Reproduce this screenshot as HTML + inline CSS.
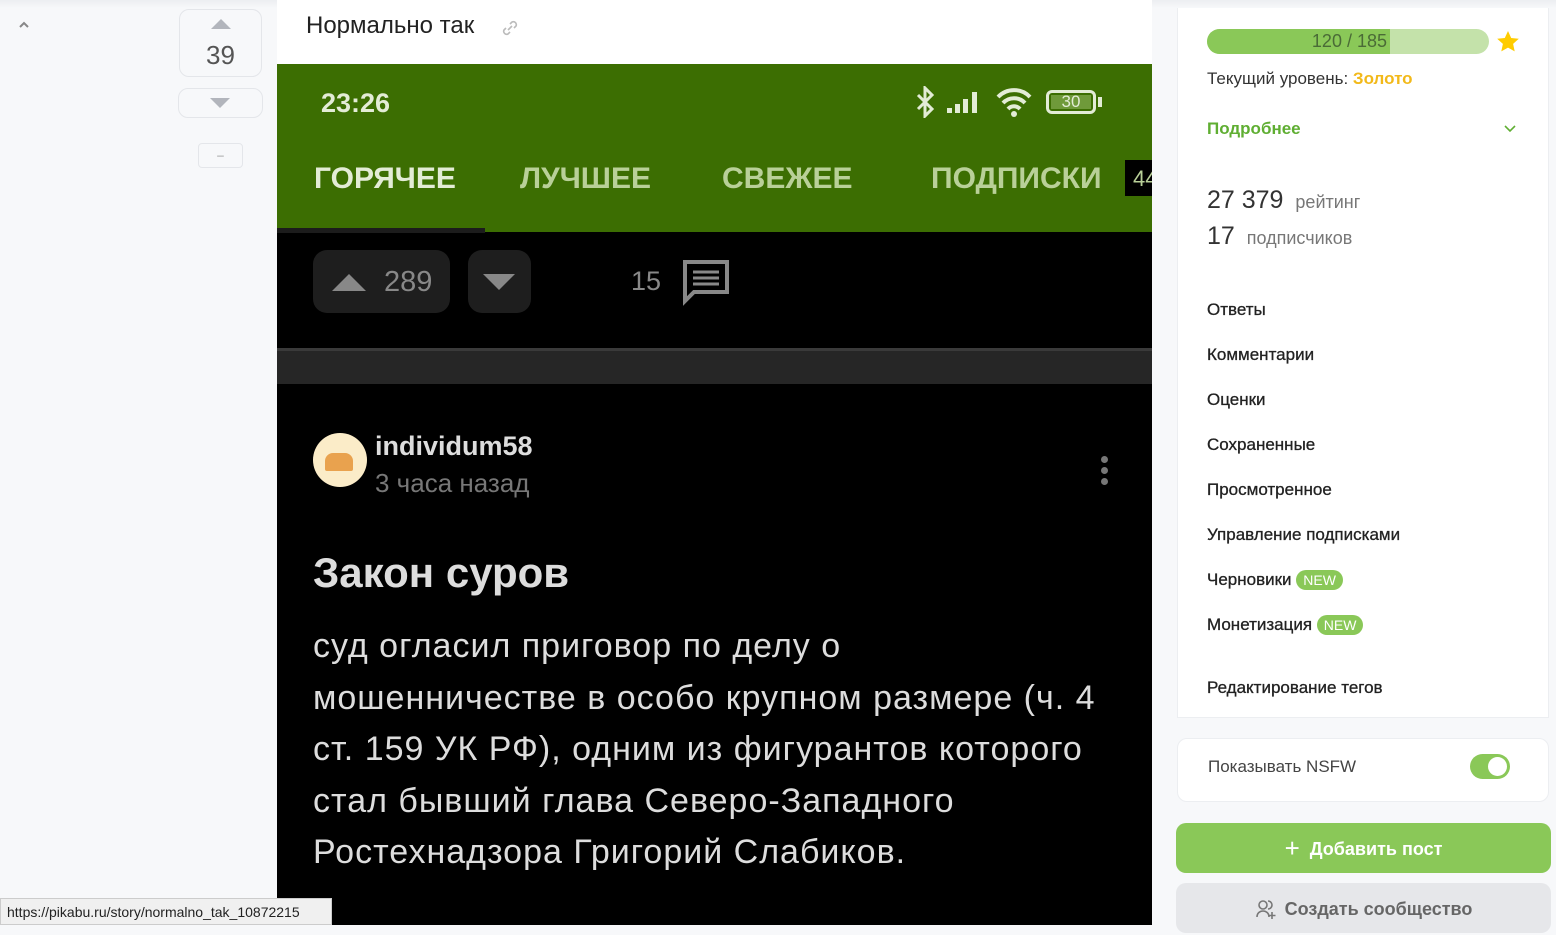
<!DOCTYPE html><html><head><meta charset="utf-8"><style>
*{margin:0;padding:0;box-sizing:border-box}
body{width:1556px;height:925px;overflow:hidden;background:#f7f8fa;font-family:"Liberation Sans",sans-serif;position:relative;color:#222}
.a{position:absolute}
.img{left:277px;top:64px;width:875px;height:861px;background:#000;overflow:hidden}
.gt{color:#e3ecd6;font-weight:bold;font-size:30px;top:97px}
.menu{font-size:17px;color:#222;left:1207px;-webkit-text-stroke:0.3px #222}
</style></head><body>
<div class="a" style="left:0;top:0;width:1556px;height:8px;background:linear-gradient(#eceef1,#f7f8fa)"></div>
<svg class="a" style="left:18px;top:20px" width="12" height="10"><path d="M2 7l4-4 4 4" stroke="#888" stroke-width="2" fill="none"/></svg>
<div class="a" style="left:179px;top:9px;width:83px;height:68px;border:1px solid #e4e6ea;border-radius:10px;background:#f7f8fa"></div>
<div class="a" style="left:211px;top:19px;width:0;height:0;border-left:10px solid transparent;border-right:10px solid transparent;border-bottom:10px solid #b2b5bc"></div>
<div class="a" style="left:179px;top:40px;width:83px;text-align:center;font-size:26px;color:#555">39</div>
<div class="a" style="left:178px;top:88px;width:85px;height:30px;border:1px solid #e4e6ea;border-radius:10px"></div>
<div class="a" style="left:210px;top:98px;width:0;height:0;border-left:10px solid transparent;border-right:10px solid transparent;border-top:10px solid #b2b5bc"></div>
<div class="a" style="left:198px;top:143px;width:45px;height:25px;border:1px solid #e4e6ea;border-radius:4px;text-align:center;color:#999;font-size:12px;line-height:22px">–</div>
<div class="a" style="left:277px;top:0;width:875px;height:64px;background:#fff"></div>
<div class="a" style="left:306px;top:12px;font-size:24px;color:#222">Нормально так</div>
<svg class="a" style="left:500px;top:18px" width="20" height="20"><path d="M8 12l4-4M6 10l-2 2a3 3 0 0 0 4 4l2-2M14 10l2-2a3 3 0 0 0-4-4l-2 2" stroke="#bbb" stroke-width="1.6" fill="none"/></svg>
<div class="a img">
 <div class="a" style="left:0;top:0;width:875px;height:168px;background:#3c6e02"></div>
 <div class="a" style="left:44px;top:24px;color:#e3ecd6;font-size:27px;font-weight:bold">23:26</div>
 <svg class="a" style="left:638px;top:22px" width="20" height="32"><path d="M3 9l14 14-7 7V2l7 7L3 23" stroke="#e3ecd6" stroke-width="3" fill="none"/></svg>
 <div class="a" style="left:670px;top:26px;width:40px;height:24px">
  <div class="a" style="left:0;top:18px;width:5px;height:5px;background:#e3ecd6"></div><div class="a" style="left:8px;top:14px;width:5px;height:9px;background:#e3ecd6"></div><div class="a" style="left:16px;top:9px;width:5px;height:14px;background:#e3ecd6"></div><div class="a" style="left:25px;top:2px;width:5px;height:21px;background:#e3ecd6"></div></div>
 <svg class="a" style="left:718px;top:22px" width="40" height="32"><path d="M3 11a22 22 0 0 1 32 0M8 17a15 15 0 0 1 22 0M13 23a8 8 0 0 1 12 0" stroke="#e3ecd6" stroke-width="4" fill="none"/><circle cx="19" cy="28" r="3" fill="#e3ecd6"/></svg>
 <div class="a" style="left:769px;top:26px;width:50px;height:24px;border:3px solid #e3ecd6;border-radius:6px;background:#3c6e02"><div class="a" style="left:2px;top:2px;width:40px;height:14px;background:#6f9a3a"></div><div class="a" style="left:0;top:-1px;width:44px;text-align:center;color:#e3ecd6;font-size:17px">30</div></div>
 <div class="a" style="left:821px;top:33px;width:4px;height:10px;background:#e3ecd6"></div>
 <div class="a gt" style="left:37px;top:98px">ГОРЯЧЕЕ</div>
 <div class="a gt" style="left:243px;top:98px;color:#b9d098">ЛУЧШЕЕ</div>
 <div class="a gt" style="left:445px;top:98px;color:#b9d098">СВЕЖЕЕ</div>
 <div class="a gt" style="left:654px;top:98px;color:#b9d098">ПОДПИСКИ</div>
 <div class="a" style="left:848px;top:96px;width:40px;height:36px;background:#000;color:#b9d098;font-size:22px;padding:6px 8px">44</div>
 <div class="a" style="left:0;top:164px;width:208px;height:5px;background:#1c1c1c"></div>
 <div class="a" style="left:36px;top:186px;width:137px;height:63px;background:#1e1e1e;border-radius:14px"></div>
 <div class="a" style="left:55px;top:210px;width:0;height:0;border-left:17px solid transparent;border-right:17px solid transparent;border-bottom:17px solid #888"></div>
 <div class="a" style="left:107px;top:202px;color:#888;font-size:29px">289</div>
 <div class="a" style="left:191px;top:186px;width:63px;height:63px;background:#1e1e1e;border-radius:14px"></div>
 <div class="a" style="left:206px;top:210px;width:0;height:0;border-left:16px solid transparent;border-right:16px solid transparent;border-top:16px solid #888"></div>
 <div class="a" style="left:354px;top:202px;color:#888;font-size:27px">15</div>
 <svg class="a" style="left:405px;top:195px" width="48" height="48"><path d="M3 3h42v30H12l-9 9z" stroke="#888" stroke-width="4" fill="none"/><path d="M11 13h26M11 19h26M11 25h26" stroke="#888" stroke-width="3"/></svg>
 <div class="a" style="left:0;top:284px;width:875px;height:36px;background:#262626;border-top:3px solid #3a3a3a"></div>
 <div class="a" style="left:36px;top:369px;width:54px;height:54px;border-radius:50%;background:#fbecc8"><div class="a" style="left:12px;top:20px;width:28px;height:18px;background:#e9a24e;border-radius:8px 8px 2px 2px"></div></div>
 <div class="a" style="left:98px;top:367px;color:#ddd;font-size:27px;font-weight:bold">individum58</div>
 <div class="a" style="left:98px;top:404px;color:#777;font-size:26px">3 часа назад</div>
 <div class="a" style="left:824px;top:392px;width:7px;height:7px;border-radius:50%;background:#777;box-shadow:0 11px #777,0 22px #777"></div>
 <div class="a" style="left:36px;top:485px;color:#ddd;font-size:42px;font-weight:bold">Закон суров</div>
 <div class="a" style="left:36px;top:557px;color:#ddd;font-size:34px;letter-spacing:1px;line-height:51.5px;white-space:nowrap">суд огласил приговор по делу о<br>мошенничестве в особо крупном размере (ч. 4<br>ст. 159 УК РФ), одним из фигурантов которого<br>стал бывший глава Северо-Западного<br>Ростехнадзора Григорий Слабиков.</div>
</div>
<div class="a" style="left:0;top:898px;width:332px;height:27px;background:#f0f0f0;border:1px solid #ccc;font-size:14px;color:#222;padding:5px 6px">https://pikabu.ru/story/normalno_tak_10872215</div>
<div class="a" style="left:1177px;top:8px;width:372px;height:710px;background:#fff;border:1px solid #eceef1;border-top:none"></div>
<div class="a" style="left:1207px;top:29px;width:282px;height:25px;border-radius:13px;background:#c4e2aa;overflow:hidden"><div style="width:183px;height:25px;background:#8ac858"></div></div>
<div class="a" style="left:1207px;top:31px;width:180px;text-align:right;font-size:18px;color:#4a6b36">120 / 185</div>
<svg class="a" style="left:1496px;top:30px" width="24" height="23"><path d="M12 1l3.2 7 7.6.8-5.7 5.1 1.6 7.5L12 17.6l-6.7 3.8 1.6-7.5L1.2 8.8l7.6-.8z" fill="#ffcc00"/></svg>
<div class="a" style="left:1207px;top:69px;font-size:17px;color:#333">Текущий уровень: <b style="color:#f2b91a">Золото</b></div>
<div class="a" style="left:1207px;top:119px;font-size:17px;color:#5fae32;font-weight:bold">Подробнее</div>
<svg class="a" style="left:1503px;top:124px" width="14" height="10"><path d="M2 2l5 5 5-5" stroke="#5fae32" stroke-width="1.6" fill="none"/></svg>
<div class="a" style="left:1207px;top:186px;font-size:25px;color:#333">27 379 <span style="font-size:18px;color:#777">&nbsp;рейтинг</span></div>
<div class="a" style="left:1207px;top:222px;font-size:25px;color:#333">17 <span style="font-size:18px;color:#777">&nbsp;подписчиков</span></div>
<div class="a menu" style="top:300px">Ответы</div>
<div class="a menu" style="top:345px">Комментарии</div>
<div class="a menu" style="top:390px">Оценки</div>
<div class="a menu" style="top:435px">Сохраненные</div>
<div class="a menu" style="top:480px">Просмотренное</div>
<div class="a menu" style="top:525px">Управление подписками</div>
<div class="a menu" style="top:570px">Черновики <span style="background:#8ac858;color:#fff;font-size:14px;border-radius:10px;padding:2px 7px;-webkit-text-stroke:0">NEW</span></div>
<div class="a menu" style="top:615px">Монетизация <span style="background:#8ac858;color:#fff;font-size:14px;border-radius:10px;padding:2px 7px;-webkit-text-stroke:0">NEW</span></div>
<div class="a menu" style="top:678px">Редактирование тегов</div>
<div class="a" style="left:1177px;top:738px;width:372px;height:64px;background:#fff;border:1px solid #eceef1;border-radius:10px"></div>
<div class="a" style="left:1208px;top:757px;font-size:17px;color:#444">Показывать NSFW</div>
<div class="a" style="left:1470px;top:754px;width:40px;height:25px;border-radius:13px;background:#8ac858"><div class="a" style="left:18px;top:3px;width:19px;height:19px;border-radius:50%;background:#fff"></div></div>
<div class="a" style="left:1176px;top:823px;width:375px;height:50px;border-radius:10px;background:#8ac858;color:#fff;font-size:18px;font-weight:bold;text-align:center;line-height:50px"><span style="font-size:26px;font-weight:normal;vertical-align:-2px">+</span>&nbsp; Добавить пост</div>
<div class="a" style="left:1176px;top:883px;width:375px;height:50px;border-radius:10px;background:#e6e7ea;color:#666;font-size:18px;font-weight:bold;text-align:center;line-height:52px"><svg width="22" height="22" style="vertical-align:-5px;margin-right:8px"><circle cx="8" cy="7" r="4" stroke="#777" stroke-width="1.6" fill="none"/><path d="M2 19c0-4 3-6 6-6s6 2 6 6M13 3a4 4 0 0 1 0 8M17 14v7M13.5 17.5h7" stroke="#777" stroke-width="1.6" fill="none"/></svg>Создать сообщество</div>
</body></html>
